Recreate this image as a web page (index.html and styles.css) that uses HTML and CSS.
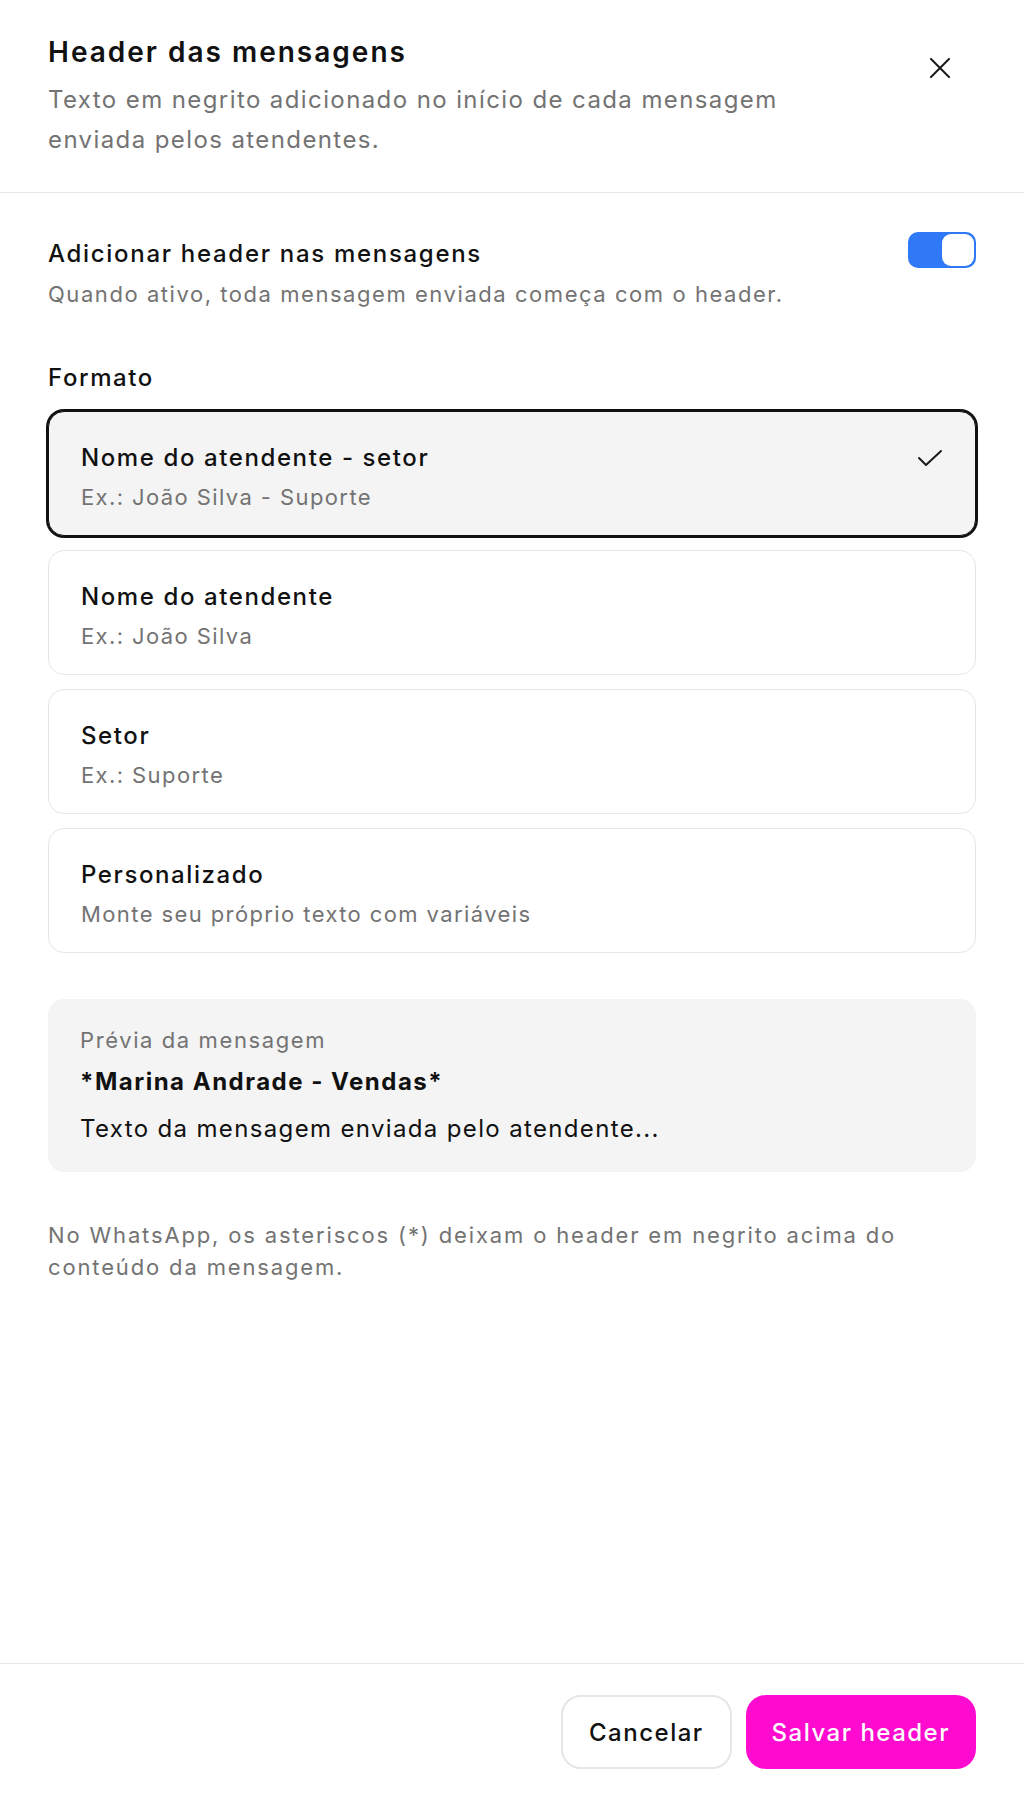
FILE: index.html
```html
<!DOCTYPE html>
<html lang="pt-BR">
  <head>
    <meta charset="UTF-8" />
    <meta name="viewport" content="width=device-width, initial-scale=1.0" />
    <title>Header das mensagens</title>
    <link rel="stylesheet" href="styles.css">
  </head>
  <body>
    <div class="sheet">
      <header class="sheet-header">
        <div class="sheet-heading">
          <h1>Header das mensagens</h1>
          <p>Texto em negrito adicionado no início de cada mensagem enviada pelos atendentes.</p>
        </div>
        <button class="close" aria-label="Fechar">
          <svg width="20" height="20" viewBox="0 0 20 20" fill="none" stroke="#1a1a1a" stroke-width="2" stroke-linecap="round">
            <path d="M1 1 L19 19 M19 1 L1 19" />
          </svg>
        </button>
      </header>

      <main class="sheet-body">
        <div class="toggle-row">
          <div>
            <div class="toggle-title">Adicionar header nas mensagens</div>
            <div class="toggle-desc">Quando ativo, toda mensagem enviada começa com o header.</div>
          </div>
          <div class="switch on"><span class="knob"></span></div>
        </div>

        <div class="label">Formato</div>
        <div class="options">
          <div class="option selected">
            <div>
              <div class="option-title">Nome do atendente - setor</div>
              <div class="option-sub">Ex.: João Silva - Suporte</div>
            </div>
            <svg class="check" width="26" height="18" viewBox="0 0 26 18" fill="none" stroke="#1a1a1a" stroke-width="2" stroke-linecap="round" stroke-linejoin="round">
              <path d="M2 9 L9 16 L24 2" />
            </svg>
          </div>
          <div class="option">
            <div>
              <div class="option-title">Nome do atendente</div>
              <div class="option-sub">Ex.: João Silva</div>
            </div>
          </div>
          <div class="option">
            <div>
              <div class="option-title">Setor</div>
              <div class="option-sub">Ex.: Suporte</div>
            </div>
          </div>
          <div class="option">
            <div>
              <div class="option-title">Personalizado</div>
              <div class="option-sub">Monte seu próprio texto com variáveis</div>
            </div>
          </div>
        </div>

        <div class="preview">
          <div class="preview-label">Prévia da mensagem</div>
          <div class="preview-header">*Marina Andrade - Vendas*</div>
          <div class="preview-text">Texto da mensagem enviada pelo atendente...</div>
        </div>

        <p class="note">No WhatsApp, os asteriscos (*) deixam o header em negrito acima do conteúdo da mensagem.</p>
      </main>

      <footer class="sheet-footer">
        <button class="btn btn-secondary">Cancelar</button>
        <button class="btn btn-primary">Salvar header</button>
      </footer>
    </div>
  </body>
</html>
```

FILE: styles.css
```css
/* Base */
* {
  box-sizing: border-box;
}

body {
  margin: 0;
  font-family: "Inter", "Noto Sans", sans-serif;
  letter-spacing: 1.6px;
  color: #111111;
  background-color: #ffffff;
}

.sheet {
  display: flex;
  flex-direction: column;
  height: 100vh;
}

/* Header */
.sheet-header {
  display: flex;
  justify-content: space-between;
  align-items: flex-start;
  padding: 32px 48px;
  border-bottom: 1px solid #e6e6e6;
}

.sheet-heading h1 {
  margin: 0;
  font-size: 28px;
  line-height: 40px;
  font-weight: 600;
  letter-spacing: 2px;
}

.sheet-heading p {
  margin: 8px 0 0;
  max-width: 780px;
  font-size: 24px;
  line-height: 40px;
  letter-spacing: 1.4px;
  color: #737373;
}

.close {
  display: flex;
  align-items: center;
  justify-content: center;
  width: 40px;
  height: 40px;
  margin: 16px 16px 0 0;
  padding: 0;
  border: none;
  background: none;
  cursor: pointer;
}

/* Body */
.sheet-body {
  flex: 1;
  padding: 39px 48px 0;
}

.toggle-row {
  display: flex;
  justify-content: space-between;
  align-items: flex-start;
}

.toggle-title {
  margin-top: 2px;
  font-size: 24px;
  line-height: 40px;
  font-weight: 500;
  letter-spacing: 1.7px;
}

.toggle-desc {
  margin-top: 4px;
  font-size: 22px;
  line-height: 32px;
  letter-spacing: 1.55px;
  color: #737373;
}

.switch {
  display: flex;
  align-items: center;
  width: 68px;
  height: 36px;
  padding: 2px;
  border-radius: 10px;
  background-color: #e5e5e5;
}

.switch.on {
  justify-content: flex-end;
  background-color: #2f78f6;
}

.knob {
  width: 32px;
  height: 32px;
  border-radius: 9px;
  background-color: #ffffff;
}

.label {
  margin-top: 52px;
  font-size: 24px;
  line-height: 32px;
  font-weight: 500;
}

/* Format options */
.options {
  display: flex;
  flex-direction: column;
  gap: 14px;
  margin-top: 17px;
}

.option {
  display: flex;
  justify-content: space-between;
  align-items: flex-start;
  height: 125px;
  padding: 30px 32px 0;
  border: 1px solid #e6e6e6;
  border-radius: 16px;
  background-color: #ffffff;
  cursor: pointer;
}

.option.selected {
  border-color: #111111;
  box-shadow: 0 0 0 2px #111111;
  background-color: #f4f4f4;
}

.option-title {
  font-size: 24px;
  line-height: 32px;
  font-weight: 500;
}

.option-sub {
  margin-top: 8px;
  font-size: 22px;
  line-height: 30px;
  letter-spacing: 1.4px;
  color: #737373;
}

.check {
  margin-top: 7px;
}

/* Preview */
.preview {
  margin-top: 46px;
  padding: 26px 32px 27px;
  border-radius: 16px;
  background-color: #f4f4f4;
}

.preview-label {
  font-size: 22px;
  line-height: 30px;
  color: #737373;
}

.preview-header {
  margin-top: 11px;
  font-size: 24px;
  line-height: 32px;
  font-weight: 700;
  letter-spacing: 1.5px;
}

.preview-text {
  margin-top: 15px;
  font-size: 24px;
  line-height: 32px;
  letter-spacing: 1.35px;
}

.note {
  margin: 47px 0 0;
  font-size: 22px;
  line-height: 32px;
  letter-spacing: 1.85px;
  color: #737373;
}

/* Footer */
.sheet-footer {
  display: flex;
  justify-content: flex-end;
  gap: 14px;
  padding: 31px 48px;
  border-top: 1px solid #e6e6e6;
}

.btn {
  height: 74px;
  padding: 0 26px;
  border-radius: 20px;
  font-family: inherit;
  font-size: 24px;
  font-weight: 500;
  letter-spacing: 1.5px;
  cursor: pointer;
}

.btn-secondary {
  border: 2px solid #e6e6e6;
  background-color: #ffffff;
  color: #111111;
}

.btn-primary {
  border: none;
  background-color: #ff0bd0;
  color: #ffffff;
}
```
